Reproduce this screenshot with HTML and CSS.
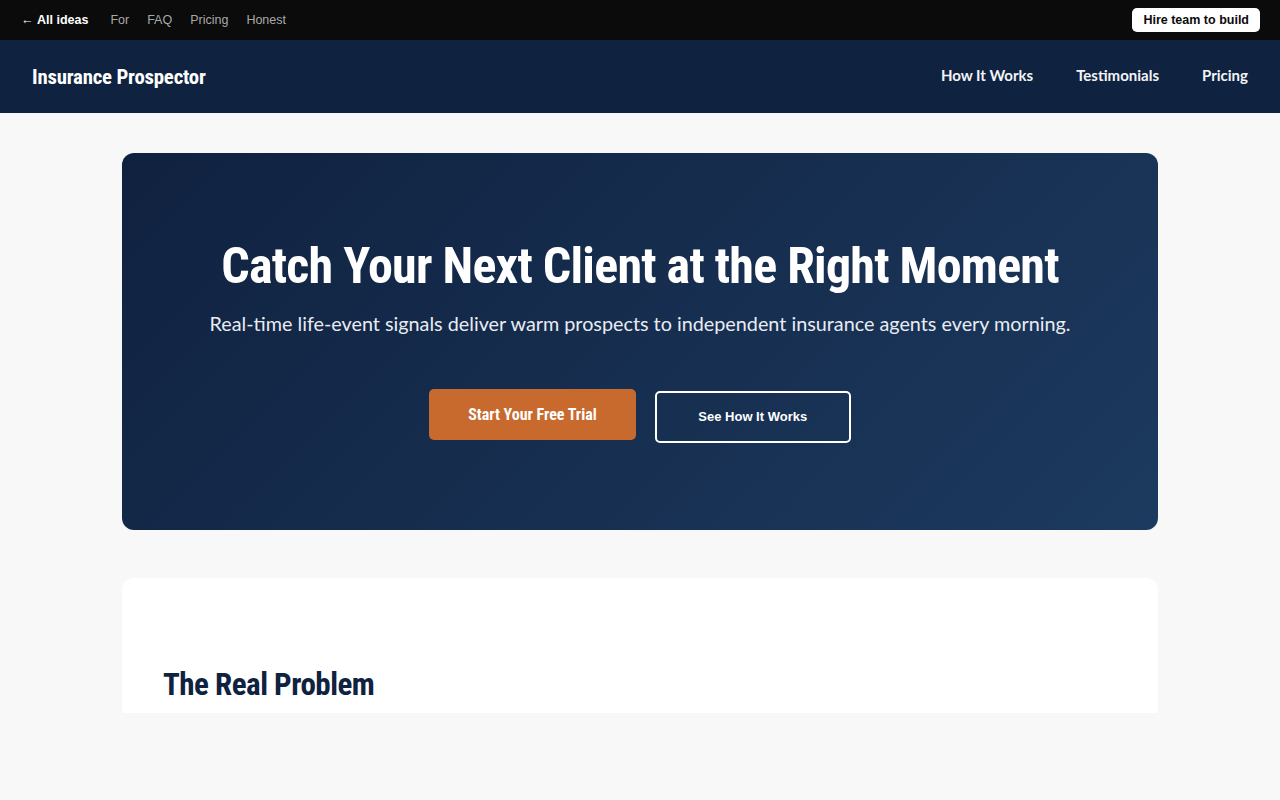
FILE: index.html
```html
<!DOCTYPE html>
<html lang="en">

<head>
  <meta charset="UTF-8" />
  <title>Insurance Prospector</title>
  <link rel="stylesheet" href="styles.css">
</head>

<body>
  <!--顶部条-->
  <div class="topbar">
    <div class="topbar-links">
      <a class="back" href="#">&larr; <b>All ideas</b></a>
      <a href="#">For</a>
      <a href="#">FAQ</a>
      <a href="#">Pricing</a>
      <a href="#">Honest</a>
    </div>
    <a class="hire" href="#">Hire team to build</a>
  </div>

  <!--导航-->
  <div class="header">
    <div class="logo">Insurance Prospector</div>
    <ul class="nav">
      <li><a href="#">How It Works</a></li>
      <li><a href="#">Testimonials</a></li>
      <li><a href="#">Pricing</a></li>
    </ul>
  </div>

  <div class="main">
    <div class="hero">
      <h1>Catch Your Next Client at the Right Moment</h1>
      <p>Real-time life-event signals deliver warm prospects to independent insurance agents every morning.</p>
      <div class="actions">
        <a class="btn btn-primary" href="#">Start Your Free Trial</a>
        <a class="btn btn-outline" href="#">See How It Works</a>
      </div>
    </div>

    <div class="card">
      <h2>The Real Problem</h2>
    </div>
  </div>
</body>

</html>
```
FILE: styles.css
```css
* {
  padding: 0;
  margin: 0;
  list-style: none;
  border: 0;
  box-sizing: border-box;
}

a {
  text-decoration: none;
  color: inherit;
}

body {
  background: #f8f8f8;
  font-family: "Lato", "Liberation Sans", sans-serif;
  height: 800px;
  overflow: hidden;
}

.topbar {
  height: 40px;
  background: #0b0b0b;
  display: flex;
  align-items: center;
  justify-content: space-between;
  padding: 0 20px 0 21px;
  font-family: "Liberation Sans", Arial, sans-serif;
  font-size: 12.5px;
}

.topbar-links {
  display: flex;
  gap: 18px;
  color: #a8a8a8;
}

.topbar-links .back {
  color: #fff;
  margin-right: 4px;
}

.hire {
  background: #fff;
  color: #0b0b0b;
  font-weight: bold;
  font-size: 12.5px;
  padding: 5px 11px;
  border-radius: 5px;
  line-height: 14px;
}

.header {
  height: 73px;
  background: #0f2240;
  display: flex;
  align-items: center;
  justify-content: space-between;
  padding: 0 32px;
}

.logo {
  font-family: "Roboto Condensed", "Roboto", sans-serif;
  font-weight: bold;
  font-size: 20.8px;
  letter-spacing: -0.2px;
  color: #fff;
}

.nav {
  display: flex;
  gap: 43px;
  margin-bottom: 5px;
}

.nav a {
  color: #f2f4f7;
  font-weight: bold;
  font-size: 15px;
}

.main {
  width: 1036px;
  margin: 40px auto 0;
}

.hero {
  border-radius: 12px;
  background: linear-gradient(135deg, #10213f 0%, #1c3a5f 100%);
  padding: 83px 40px 87px;
  text-align: center;
  color: #fff;
}

.hero h1 {
  font-family: "Roboto Condensed", "Roboto", sans-serif;
  font-weight: bold;
  font-size: 50px;
  letter-spacing: -0.75px;
  line-height: 60px;
}

.hero p {
  font-size: 19.8px;
  line-height: 32px;
  color: #e8ecf2;
  margin-top: 11px;
}

.actions {
  display: flex;
  justify-content: center;
  align-items: flex-start;
  gap: 19px;
  margin-top: 50px;
}

.btn {
  display: block;
  border-radius: 5px;
  color: #fff;
}

.btn-primary {
  background: #c8692e;
  font-family: "Roboto Condensed", "Roboto", sans-serif;
  font-weight: bold;
  font-size: 16px;
  line-height: 19px;
  padding: 16px 39px;
}

.btn-outline {
  border: 2px solid #fff;
  font-family: "Liberation Sans", Arial, sans-serif;
  font-weight: bold;
  font-size: 13px;
  line-height: 15px;
  padding: 16px 0 17px;
  width: 196px;
  text-align: center;
  margin-top: 2px;
}

.card {
  margin-top: 48px;
  background: #fff;
  border-radius: 12px 12px 0 0;
  height: 135px;
  overflow: hidden;
  padding: 88px 41px 0;
}

.card h2 {
  font-family: "Roboto Condensed", "Roboto", sans-serif;
  font-weight: bold;
  font-size: 31px;
  line-height: 38px;
  letter-spacing: -0.5px;
  color: #0f2240;
}
```
